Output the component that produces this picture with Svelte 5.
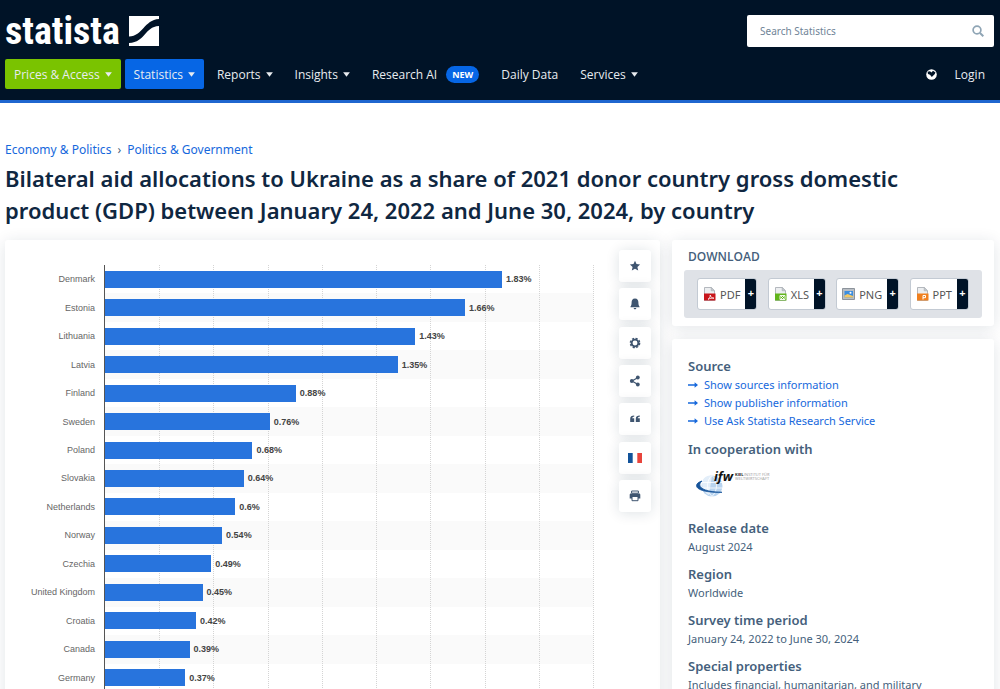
<script lang="ts">
  const max = 2.25;

  const countries = [
    { name: 'Denmark', value: 1.83 },
    { name: 'Estonia', value: 1.66 },
    { name: 'Lithuania', value: 1.43 },
    { name: 'Latvia', value: 1.35 },
    { name: 'Finland', value: 0.88 },
    { name: 'Sweden', value: 0.76 },
    { name: 'Poland', value: 0.68 },
    { name: 'Slovakia', value: 0.64 },
    { name: 'Netherlands', value: 0.6 },
    { name: 'Norway', value: 0.54 },
    { name: 'Czechia', value: 0.49 },
    { name: 'United Kingdom', value: 0.45 },
    { name: 'Croatia', value: 0.42 },
    { name: 'Canada', value: 0.39 },
    { name: 'Germany', value: 0.37 }
  ];

  const ticks = [0.25, 0.5, 0.75, 1, 1.25, 1.5, 1.75, 2, 2.25];

  const nav = [
    { label: 'Prices & Access', kind: 'green', caret: true },
    { label: 'Statistics', kind: 'blue', caret: true },
    { label: 'Reports', kind: '', caret: true },
    { label: 'Insights', kind: '', caret: true },
    { label: 'Research AI', kind: '', badge: 'NEW' },
    { label: 'Daily Data', kind: '' },
    { label: 'Services', kind: '', caret: true }
  ];

  const actions = ['favorite', 'alert', 'settings', 'share', 'cite', 'french', 'print'];

  const downloads = [
    { label: 'PDF', color: '#c8151b' },
    { label: 'XLS', color: '#62b51c' },
    { label: 'PNG', color: '#3b8ee0' },
    { label: 'PPT', color: '#f0801f' }
  ];

  const sources = ['Show sources information', 'Show publisher information', 'Use Ask Statista Research Service'];

  const facts = [
    { title: 'Release date', text: 'August 2024' },
    { title: 'Region', text: 'Worldwide' },
    { title: 'Survey time period', text: 'January 24, 2022 to June 30, 2024' },
    { title: 'Special properties', text: 'Includes financial, humanitarian, and military' }
  ];
</script>

<header>
  <div class="top">
    <a class="logo" href="/" aria-label="statista">
      <span>statista</span>
      <svg width="30" height="30" viewBox="0 0 30 30">
        <path fill="#fff" d="M0 0H30V3C15 4 14 20 0 20.500Z" />
        <path fill="#fff" d="M30 10V30H0V27C17 26 15 11 30 10Z" />
      </svg>
    </a>
    <form class="search">
      <input type="text" placeholder="Search Statistics" aria-label="Search Statistics" />
      <button type="submit" aria-label="Search">
        <svg width="12" height="12" viewBox="0 0 12 12" fill="none" stroke="#8fa5b5">
          <circle cx="5" cy="5" r="3.900" stroke-width="1.700" />
          <path d="M8 8l3.300 3.300" stroke-width="2" />
        </svg>
      </button>
    </form>
  </div>
  <nav>
    {#each nav as item (item.label)}
      <a href="/" class={`item ${item.kind}`}>
        {item.label}
        {#if item.caret}
          <svg width="7" height="5" viewBox="0 0 7 5"><path fill="currentColor" d="M.1.300h6.800L3.500 4.800z" /></svg>
        {/if}
        {#if item.badge}
          <span class="badge">{item.badge}</span>
        {/if}
      </a>
    {/each}
    <button class="globe" aria-label="Language">
      <svg width="11" height="11" viewBox="0 0 11 11">
        <circle cx="5.500" cy="5.500" r="5.300" fill="#fff" />
        <path fill="#001327" d="M1.600 2.800L4 2.300 5.500 3.600 7 1.800 9.500 3.500 8.600 5.300 5.800 8 4 5.800 2 5z" />
      </svg>
    </button>
    <a href="/" class="item">Login</a>
  </nav>
</header>

<main>
  <div class="crumbs">
    <a href="/">Economy &amp; Politics</a>
    <span>›</span>
    <a href="/">Politics &amp; Government</a>
  </div>
  <h1>Bilateral aid allocations to Ukraine as a share of 2021 donor country gross domestic product (GDP) between January 24, 2022 and June 30, 2024, by country</h1>

  <div class="columns">
    <section class="card chart-card">
      <div class="chart">
        <div class="grid-lines">
          {#each ticks as tick (tick)}
            <i style={`left: ${(tick / max) * 100}%`}></i>
          {/each}
        </div>
        {#each countries as country (country.name)}
          <div class="row">
            <span class="name">{country.name}</span>
            <div class="track">
              <div class="bar" style={`width: ${(country.value / max) * 100}%`}></div>
              <span class="value">{country.value}%</span>
            </div>
          </div>
        {/each}
      </div>

      <div class="actions">
        {#each actions as action (action)}
          <button aria-label={action}>
            {#if action === 'french'}
              <svg width="14" height="10" viewBox="0 0 14 10">
                <path fill="#12539a" d="M0 0h4.700v10H0z" />
                <path fill="#e8443c" d="M9.300 0H14v10H9.300z" />
              </svg>
            {:else}
              <svg width="12" height="12" viewBox="0 0 12 12" fill="#3f5570">
                {#if action === 'favorite'}
                  <path d="M6 .8l1.500 3.300 3.600.4-2.700 2.400.8 3.600L6 8.700l-3.200 1.800.8-3.600L.9 4.500l3.600-.4z" />
                {:else if action === 'alert'}
                  <path d="M6 .6C3.500.6 2.600 2.500 2.600 4.500 2.600 7 2.200 7.600 1.500 8.600v.7h9v-.7C9.800 7.600 9.400 7 9.400 4.500 9.400 2.500 8.500.6 6 .6zM4.700 10h2.600c0 .8-.5 1.300-1.300 1.300S4.700 10.800 4.700 10z" />
                {:else if action === 'settings'}
                  <circle cx="6" cy="6" r="3.400" fill="none" stroke="#3f5570" stroke-width="1.900" />
                  <circle cx="6" cy="6" r="4.700" fill="none" stroke="#3f5570" stroke-width="1.300" stroke-dasharray="2.200 1.490" />
                {:else if action === 'share'}
                  <path d="M9 2.400L3 6l6 3.600" fill="none" stroke="#3f5570" stroke-width="1.200" />
                  <circle cx="8.800" cy="2.500" r="1.900" />
                  <circle cx="2.800" cy="6" r="1.900" />
                  <circle cx="8.800" cy="9.500" r="1.900" />
                {:else if action === 'cite'}
                  <path d="M5.200 2.500v1.200C3.900 3.700 3.200 4.300 3.100 5.300h2.100V9H1.200V5.700c0-2 1.500-3.200 4-3.200zM10.800 2.500v1.200C9.500 3.700 8.800 4.300 8.700 5.300h2.100V9H6.800V5.700c0-2 1.500-3.200 4-3.200z" />
                {:else}
                  <path d="M2.600 1h6.800v2.200H2.600z" fill="none" stroke="#3f5570" />
                  <path d="M2 3.500h8c.8 0 1.300.5 1.300 1.300v3.700H.7V4.800C.7 4 1.200 3.500 2 3.500z" />
                  <path d="M3 6.500h6v4.200H3z" fill="#fff" stroke="#3f5570" />
                {/if}
              </svg>
            {/if}
          </button>
        {/each}
      </div>
    </section>

    <aside>
      <section class="card download">
        <h2>DOWNLOAD</h2>
        <div class="formats">
          {#each downloads as file (file.label)}
            <button>
              <span class="type">
                <svg width="13" height="14" viewBox="0 0 13 14">
                  {#if file.label === 'PNG'}
                    <path fill="#b9bec4" stroke="#8c939b" d="M.5 1.500h12v11H.500z" />
                    <path fill={file.color} d="M2.500 4h8.500v6.500H2.500z" />
                    <path fill="#f4c763" d="M2.500 10.500v-2l3-1.500 5.500 2v1.500z" />
                    <circle cx="8.500" cy="5.800" r="1" fill="#fff" />
                  {:else}
                    <path fill="#eceef0" stroke="#a3a8ae" stroke-width=".8" d="M1.500.500h6.700l3.300 3.300v9.700h-10z" />
                    <path fill="#c9cdd2" stroke="#a3a8ae" stroke-width=".6" d="M8.200.500v3.300h3.300z" />
                    <path fill={file.color} d="M1 6.500h11.500v7H1z" />
                    {#if file.label === 'PDF'}
                      <path fill="none" stroke="#fff" stroke-width=".8" d="M5 12.300c2-1.500 2.500-3 2.200-4.300.5 2 1.500 3 3.800 3.200-2-.2-4 0-6 1.100z" />
                    {:else if file.label === 'XLS'}
                      <path fill="none" stroke="#fff" stroke-width=".9" d="M6 8.500h5v4H6zM7 9l3 3M10 9l-3 3" />
                    {:else}
                      <path fill="none" stroke="#fff" stroke-width="1" d="M7 12.500V8.500h2.500v2.200H7" />
                    {/if}
                  {/if}
                </svg>
                {file.label}
              </span>
              <span class="plus">+</span>
            </button>
          {/each}
        </div>
      </section>

      <section class="card info">
        <h3>Source</h3>
        <ul>
          {#each sources as source (source)}
            <li>
              <a href="/">
                <svg width="10" height="8" viewBox="0 0 10 8">
                  <path fill="currentColor" d="M0 3.200h6.600V1.300L10 4 6.600 6.700V4.800H0z" />
                </svg>
                {source}
              </a>
            </li>
          {/each}
        </ul>

        <h3>In cooperation with</h3>
        <svg class="partner" width="84" height="30" viewBox="0 0 84 30" role="img" aria-label="ifw Kiel">
          <circle cx="18" cy="17" r="10.500" fill="#b9d4ef" />
          <path d="M8 14C9 8 13 6.500 18 6.500L15 26C11 24 8 20 8 14z" fill="#e3eef9" />
          <path d="M18 6.500c-6 5-6 15 0 21M18 6.500c6 5 6 15 0 21M8 13.500h20M8 19h20" fill="none" stroke="#fff" stroke-width=".8" />
          <path d="M8 12C-2 15 0 24 28 23.300 8 23 2 17 8 12z" fill="#17549a" stroke="#17549a" stroke-width=".8" />
          <text x="20" y="12" class="ifw">ifw</text>
          <text x="41" y="7" class="tiny strong">KIEL</text>
          <text x="50" y="7" class="tiny">INSTITUT FÜR</text>
          <text x="41" y="11" class="tiny">WELTWIRTSCHAFT</text>
        </svg>

        {#each facts as fact (fact.title)}
          <h3>{fact.title}</h3>
          <p>{fact.text}</p>
        {/each}
      </section>
    </aside>
  </div>
</main>

<style>
  :global(body) {
    background: #fff;
    font-family: 'Noto Sans', 'Open Sans', sans-serif;
    font-size: 12px;
    color: #455f7c;
  }

  a {
    color: #1668dc;
    text-decoration: none;
  }

  button {
    border: 0;
    padding: 0;
    background: none;
    font: inherit;
    cursor: pointer;
  }

  svg {
    flex: none;
  }

  header {
    background: #001327;
    border-bottom: 3px solid #1f66cf;
    padding: 15px 6px 11px 5px;
  }

  .top {
    display: flex;
    justify-content: space-between;
    height: 44px;
  }

  .logo {
    display: flex;
    gap: 9px;
    height: 32px;
    align-items: center;
    color: #fff;
  }

  .logo span {
    font: bold 38px/32px 'Roboto Condensed', Roboto, sans-serif;
  }

  .search {
    display: flex;
    align-items: center;
    width: 247px;
    height: 32px;
    box-sizing: border-box;
    padding: 0 10px 0 13px;
    background: #fff;
    border-radius: 2px;
  }

  .search input {
    flex: 1;
    min-width: 0;
    border: 0;
    outline: 0;
    padding: 0;
    background: none;
    font: inherit;
    font-size: 10px;
  }

  .search input::placeholder {
    color: #6f8497;
  }

  .search button {
    display: flex;
  }

  nav {
    display: flex;
    align-items: center;
    gap: 4px;
  }

  .item {
    display: flex;
    align-items: center;
    gap: 5px;
    height: 30px;
    padding: 0 9px;
    border-radius: 2px;
    color: #e8ecf0;
    font-family: 'Open Sans', 'Noto Sans', sans-serif;
    white-space: nowrap;
  }

  .green {
    background: #7ac300;
  }

  .blue {
    background: #0666e5;
  }

  .badge {
    margin-left: 4px;
    padding: 0 6px;
    border-radius: 9px;
    background: #0666e5;
    color: #fff;
    font-size: 9px;
    font-weight: 700;
    line-height: 17px;
  }

  .globe {
    display: flex;
    margin-left: auto;
    margin-right: 5px;
  }

  main {
    padding: 38px 6px 0 5px;
  }

  .crumbs {
    display: flex;
    gap: 6px;
    line-height: 18px;
  }

  h1 {
    margin: 3px 0 14px;
    padding-right: 60px;
    font-size: 22px;
    line-height: 32px;
    font-weight: 600;
    color: #0f2741;
  }

  .columns {
    display: grid;
    grid-template-columns: 655fr 322fr;
    gap: 12px;
  }

  .card {
    background: #fff;
    border-radius: 3px;
    box-shadow: 0 2px 16px rgba(15, 39, 65, 0.12);
  }

  .chart-card {
    display: flex;
    align-items: flex-start;
    gap: 26px;
    padding: 10px 9px 10px 10px;
  }

  .chart {
    position: relative;
    flex: 1;
    display: grid;
    grid-auto-rows: 1fr;
    height: 427px;
    margin-top: 15px;
    font-family: 'Liberation Sans', Arial, sans-serif;
    font-size: 9px;
  }

  .grid-lines {
    position: absolute;
    inset: 0 0 0 90px;
  }

  .grid-lines i {
    position: absolute;
    top: 0;
    bottom: 0;
    border-left: 1px dotted #d4d4d4;
  }

  .row {
    display: grid;
    grid-template-columns: 80px 1fr;
    gap: 10px;
    align-items: center;
  }

  .name {
    text-align: right;
    color: #666;
    white-space: nowrap;
  }

  .track {
    display: flex;
    align-items: center;
    gap: 4px;
    height: 100%;
    box-shadow: -1px 0 #555;
  }

  .row:nth-child(odd) .track {
    background: rgba(0, 0, 0, 0.02);
  }

  .bar {
    position: relative;
    height: 17px;
    background: #2874dd;
  }

  .value {
    position: relative;
    color: #444;
    font-weight: 700;
  }

  .actions {
    display: flex;
    flex-direction: column;
    justify-content: space-between;
    height: 262px;
  }

  .actions button {
    display: flex;
    align-items: center;
    justify-content: center;
    width: 32px;
    height: 32px;
    border-radius: 3px;
    background: #fff;
    box-shadow: 0 1px 14px rgba(15, 39, 65, 0.14);
  }

  aside {
    display: flex;
    flex-direction: column;
    gap: 13px;
  }

  .download {
    padding: 8px 12px;
  }

  h2 {
    margin: 0 0 4px;
    padding-left: 4px;
    font-family: 'Open Sans', 'Noto Sans', sans-serif;
    font-size: 12px;
    line-height: 18px;
    font-weight: 600;
  }

  .formats {
    display: flex;
    justify-content: space-between;
    padding: 8px 13px;
    border-radius: 3px;
    background: #dfe2e7;
  }

  .formats button {
    display: flex;
    height: 32px;
    box-sizing: border-box;
    border: 1px solid #c3cad3;
    border-radius: 3px;
    background: #fff;
    overflow: hidden;
    color: #555;
    font-size: 11px;
  }

  .type {
    display: flex;
    align-items: center;
    gap: 4px;
    height: 100%;
    padding: 0 5px;
  }

  .plus {
    width: 11px;
    background: #001327;
    color: #fff;
    font-weight: 700;
    line-height: 28px;
  }

  .info {
    padding: 17px 16px 16px;
    font-size: 11px;
  }

  h3 {
    margin: 0;
    font-size: 13px;
    line-height: 20px;
    font-weight: 600;
  }

  ul {
    list-style: none;
    margin: 0 0 9px;
    padding: 0;
  }

  li a {
    display: flex;
    align-items: center;
    gap: 6px;
    line-height: 18px;
  }

  .partner {
    display: block;
    margin: 10px 0 19px 6px;
    overflow: visible;
  }

  .ifw {
    font: italic bold 13px 'Open Sans', sans-serif;
    fill: #111;
  }

  .tiny {
    font: 4px 'Open Sans', sans-serif;
    fill: #999;
  }

  .strong {
    font-weight: 700;
    fill: #222;
  }

  p {
    margin: 0 0 8px;
    line-height: 18px;
    white-space: nowrap;
  }
</style>
